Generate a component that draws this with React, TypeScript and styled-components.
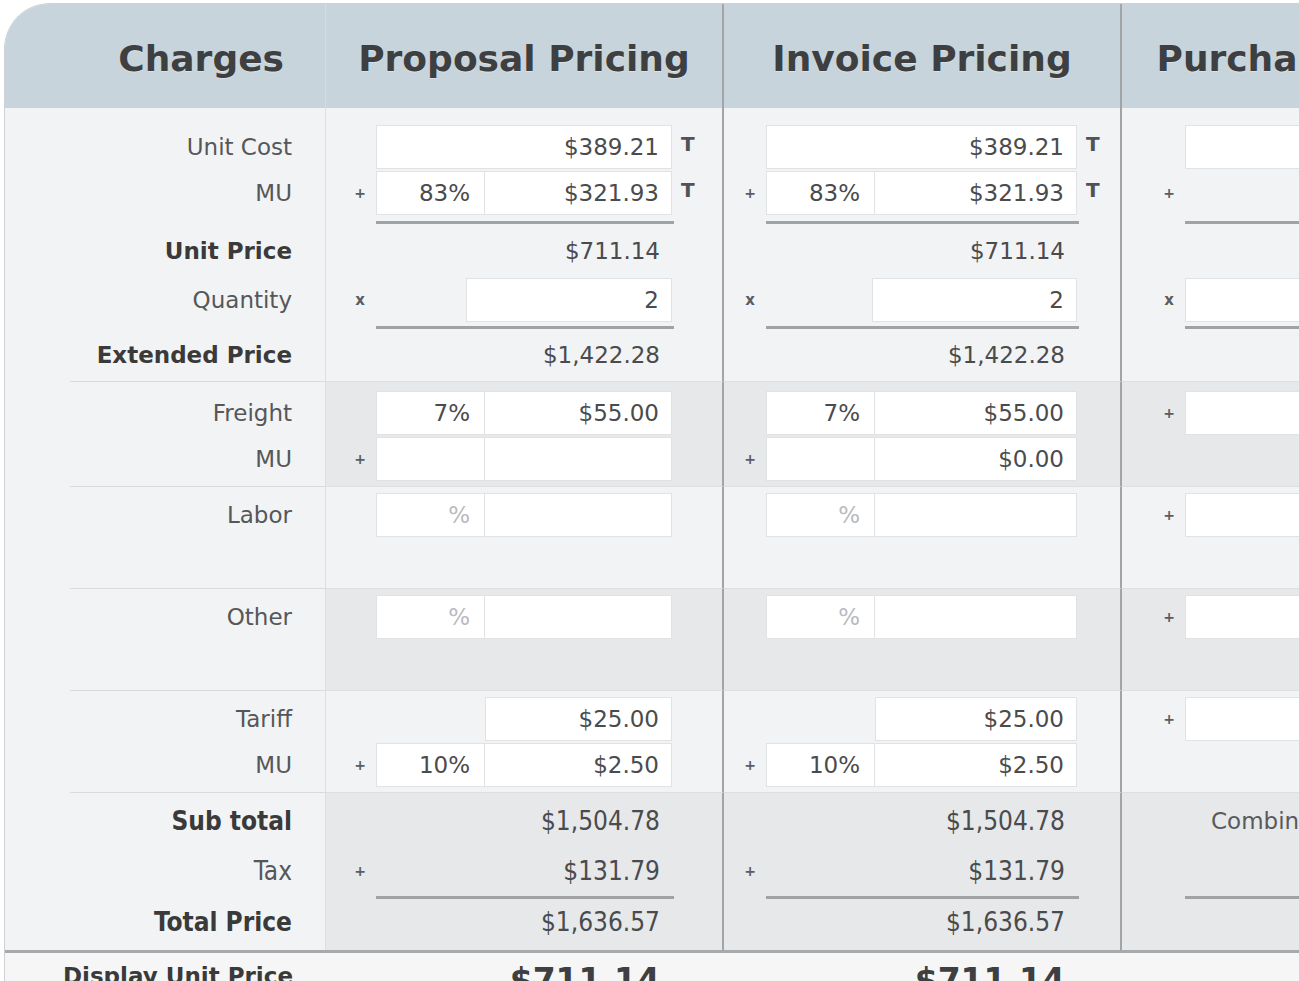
import React from 'react';
import styled, { createGlobalStyle } from 'styled-components';

const Global = createGlobalStyle`
  html, body { margin: 0; padding: 0; background: #ffffff; overflow: hidden; }
  body { font-family: "DejaVu Sans", Verdana, sans-serif; }
`;

const TEMPLATE = '321px 398px 398px 410px';

interface ColCfg { op: number; box: number; pct: number; qty: number; divider: boolean; }
const COLS: ColCfg[] = [
  { op: 50, box: 296, pct: 109, qty: 90, divider: true },
  { op: 42, box: 311, pct: 109, qty: 106, divider: true },
  { op: 63, box: 330, pct: 109, qty: 0, divider: false },
];

type Content =
  | { t: 'none' }
  | { t: 'op'; op: string }
  | { t: 'rule' }
  | { t: 'full'; op?: string; v: string; T?: boolean }
  | { t: 'pair'; op?: string; pct: string | null; ph?: boolean; money: string; T?: boolean }
  | { t: 'qty'; op?: string; v: string }
  | { t: 'text'; op?: string; v: string }
  | { t: 'note'; v: string };

interface LineDef { kind: 'row' | 'rule'; h: number; }
interface LabelDef { text: string; bold?: boolean; }
interface SectionDef {
  shaded: boolean;
  sep: boolean;
  padTop: number;
  padBottom: number;
  summary?: boolean;
  lines: LineDef[];
  labels: (LabelDef | null)[];
  cols: Content[][];
}

const row = (h: number): LineDef => ({ kind: 'row', h });
const rule = (h: number): LineDef => ({ kind: 'rule', h });
const L = (text: string): LabelDef => ({ text });
const B = (text: string): LabelDef => ({ text, bold: true });
const NONE: Content = { t: 'none' };
const RULE: Content = { t: 'rule' };

const SECTIONS: SectionDef[] = [
  {
    shaded: false, sep: false, padTop: 16, padBottom: 0,
    lines: [row(46), row(46), rule(8), row(53), row(46), rule(6), row(52)],
    labels: [L('Unit Cost'), L('MU'), null, B('Unit Price'), L('Quantity'), null, B('Extended Price')],
    cols: [
      [{ t: 'full', v: '$389.21', T: true }, { t: 'pair', op: '+', pct: '83%', money: '$321.93', T: true }, RULE, { t: 'text', v: '$711.14' }, { t: 'qty', op: 'x', v: '2' }, RULE, { t: 'text', v: '$1,422.28' }],
      [{ t: 'full', v: '$389.21', T: true }, { t: 'pair', op: '+', pct: '83%', money: '$321.93', T: true }, RULE, { t: 'text', v: '$711.14' }, { t: 'qty', op: 'x', v: '2' }, RULE, { t: 'text', v: '$1,422.28' }],
      [{ t: 'full', v: '' }, { t: 'op', op: '+' }, RULE, NONE, { t: 'qty', op: 'x', v: '' }, RULE, NONE],
    ],
  },
  {
    shaded: true, sep: true, padTop: 8, padBottom: 4,
    lines: [row(46), row(46)],
    labels: [L('Freight'), L('MU')],
    cols: [
      [{ t: 'pair', pct: '7%', money: '$55.00' }, { t: 'pair', op: '+', pct: '', money: '' }],
      [{ t: 'pair', pct: '7%', money: '$55.00' }, { t: 'pair', op: '+', pct: '', money: '$0.00' }],
      [{ t: 'full', op: '+', v: '' }, NONE],
    ],
  },
  {
    shaded: false, sep: true, padTop: 5, padBottom: 50,
    lines: [row(46)],
    labels: [L('Labor')],
    cols: [
      [{ t: 'pair', pct: '', ph: true, money: '' }],
      [{ t: 'pair', pct: '', ph: true, money: '' }],
      [{ t: 'full', op: '+', v: '' }],
    ],
  },
  {
    shaded: true, sep: true, padTop: 5, padBottom: 50,
    lines: [row(46)],
    labels: [L('Other')],
    cols: [
      [{ t: 'pair', pct: '', ph: true, money: '' }],
      [{ t: 'pair', pct: '', ph: true, money: '' }],
      [{ t: 'full', op: '+', v: '' }],
    ],
  },
  {
    shaded: false, sep: true, padTop: 5, padBottom: 4,
    lines: [row(46), row(46)],
    labels: [L('Tariff'), L('MU')],
    cols: [
      [{ t: 'pair', pct: null, money: '$25.00' }, { t: 'pair', op: '+', pct: '10%', money: '$2.50' }],
      [{ t: 'pair', pct: null, money: '$25.00' }, { t: 'pair', op: '+', pct: '10%', money: '$2.50' }],
      [{ t: 'full', op: '+', v: '' }, NONE],
    ],
  },
  {
    shaded: true, sep: true, padTop: 0, padBottom: 5, summary: true,
    lines: [row(55), row(46), rule(5), row(46)],
    labels: [B('Sub total'), L('Tax'), null, B('Total Price')],
    cols: [
      [{ t: 'text', v: '$1,504.78' }, { t: 'text', op: '+', v: '$131.79' }, RULE, { t: 'text', v: '$1,636.57' }],
      [{ t: 'text', v: '$1,504.78' }, { t: 'text', op: '+', v: '$131.79' }, RULE, { t: 'text', v: '$1,636.57' }],
      [{ t: 'note', v: 'Combined Tax' }, NONE, RULE, NONE],
    ],
  },
];

/* ---------- styled parts ---------- */

const Page = styled.div`
  width: 1299px;
  height: 981px;
  box-sizing: border-box;
  padding: 3px 0 0 4px;
  overflow: hidden;
`;

const Sheet = styled.div`
  width: 1528px;
  border-top: 1px solid #cdd2d6;
  border-left: 1px solid #cdd2d6;
  border-top-left-radius: 46px;
  overflow: hidden;
  background: #f2f3f5;
  color: #4a4a4a;
`;

const HeaderRow = styled.div`
  display: grid;
  grid-template-columns: ${TEMPLATE};
  height: 104px;
  background: #c8d4dc;
`;

const HeadCell = styled.div<{ $label?: boolean; $divider?: boolean }>`
  display: flex;
  align-items: center;
  justify-content: ${p => (p.$label ? 'flex-end' : 'center')};
  box-sizing: border-box;
  padding: 4px ${p => (p.$label ? '41px' : '0')} 0 0;
  font-size: 36px;
  font-weight: bold;
  color: #3d3f41;
  text-shadow: 0 1px 0 rgba(255, 255, 255, 0.35);
  white-space: nowrap;
  overflow: hidden;
  border-right: ${p => (p.$label ? '1px solid #d6dde2' : p.$divider ? '2px solid #a2a5a8' : 'none')};
`;

const SectionRow = styled.div`
  display: grid;
  grid-template-columns: ${TEMPLATE};
`;

const LabelCell = styled.div`
  box-sizing: border-box;
  padding-left: 65px;
  border-right: 1px solid #dcdee1;
`;

const LabelStack = styled.div<{ $sep: boolean; $pt: number; $pb: number }>`
  ${p => (p.$sep ? 'border-top: 1px solid #d9dadc;' : '')}
  padding: ${p => p.$pt}px 33px ${p => p.$pb}px 0;
`;

const LabelLine = styled.div<{ $h: number; $bold?: boolean; $summary?: boolean }>`
  height: ${p => p.$h}px;
  display: flex;
  align-items: center;
  justify-content: flex-end;
  white-space: nowrap;
  font-size: ${p => (p.$summary ? '26px' : '23px')};
  font-family: ${p => (p.$summary ? '"DejaVu Sans Condensed", "DejaVu Sans", sans-serif' : 'inherit')};
  font-stretch: ${p => (p.$summary ? 'condensed' : 'normal')};
  font-weight: ${p => (p.$bold ? 'bold' : 'normal')};
  color: ${p => (p.$bold ? '#3a3a3a' : '#555759')};
`;

const Gap = styled.div<{ $h: number }>`
  height: ${p => p.$h}px;
`;

const ValueCell = styled.div<{ $shaded: boolean; $divider: boolean; $sep: boolean; $pt: number; $pb: number }>`
  box-sizing: border-box;
  background: ${p => (p.$shaded ? '#e7e8ea' : '#f2f3f5')};
  border-right: ${p => (p.$divider ? '2px solid #a2a5a8' : 'none')};
  ${p => (p.$sep ? 'border-top: 1px solid #dedfe1;' : '')}
  padding: ${p => p.$pt}px 0 ${p => p.$pb}px 0;
  overflow: hidden;
`;

const Line = styled.div<{ $h: number; $summary?: boolean }>`
  height: ${p => p.$h}px;
  display: flex;
  align-items: center;
  font-size: ${p => (p.$summary ? '26px' : '23px')};
  font-family: ${p => (p.$summary ? '"DejaVu Sans Condensed", "DejaVu Sans", sans-serif' : 'inherit')};
  font-stretch: ${p => (p.$summary ? 'condensed' : 'normal')};
`;

const RuleLine = styled.div<{ $h: number }>`
  height: ${p => p.$h}px;
  display: flex;
  align-items: flex-end;
`;

const RuleBar = styled.div<{ $ml: number; $w: number }>`
  margin-left: ${p => p.$ml}px;
  flex: 0 0 ${p => p.$w}px;
  height: 3px;
  background: #a0a3a6;
`;

const OpSlot = styled.div<{ $w: number; $x?: boolean }>`
  flex: 0 0 ${p => p.$w}px;
  box-sizing: border-box;
  padding-right: ${p => (p.$x ? '11px' : '10px')};
  text-align: right;
  font-family: "DejaVu Sans", sans-serif;
  font-stretch: normal;
  font-size: ${p => (p.$x ? '15px' : '14px')};
  font-weight: bold;
  color: #5b5d60;
`;

const BoxArea = styled.div<{ $w: number }>`
  flex: 0 0 ${p => p.$w}px;
  width: ${p => p.$w}px;
  display: flex;
  height: 44px;
`;

const Field = styled.input<{ $w?: number; $ml?: number; $joined?: boolean; $pr?: number }>`
  box-sizing: border-box;
  height: 44px;
  flex: ${p => (p.$w ? `0 0 ${p.$w}px` : '1 1 0%')};
  width: ${p => (p.$w ? `${p.$w}px` : '0')};
  min-width: 0;
  margin: 0 0 0 ${p => p.$ml ?? 0}px;
  border: 1px solid #e1e2e4;
  ${p => (p.$joined ? 'border-left: none;' : '')}
  border-radius: 0;
  background: #ffffff;
  padding: 0 ${p => p.$pr ?? 12}px 0 0;
  text-align: right;
  font-family: "DejaVu Sans", sans-serif;
  font-size: 23px;
  color: #4a4b4d;
  outline: none;
  &::placeholder { color: #b7bbc0; }
`;

const Spacer = styled.div<{ $w: number }>`
  flex: 0 0 ${p => p.$w}px;
`;

const TMark = styled.div`
  align-self: flex-start;
  margin: 8px 0 0 9px;
  font-size: 20px;
  font-weight: bold;
  color: #505255;
`;

const ValueText = styled.div<{ $w: number }>`
  flex: 0 0 ${p => p.$w}px;
  box-sizing: border-box;
  padding-right: 12px;
  text-align: right;
  white-space: nowrap;
  color: #4a4b4d;
`;

const Note = styled.div`
  padding-left: 26px;
  white-space: nowrap;
  font-family: "DejaVu Sans", sans-serif;
  font-stretch: normal;
  font-size: 23px;
  color: #585a5d;
`;

const FooterRow = styled.div`
  display: grid;
  grid-template-columns: ${TEMPLATE};
  border-top: 3px solid #a7aaad;
  background: #f6f6f7;
  height: 80px;
`;

const FooterLabel = styled.div`
  box-sizing: border-box;
  padding: 10px 33px 0 0;
  text-align: right;
  font-size: 23px;
  font-weight: bold;
  color: #3a3a3a;
  white-space: nowrap;
`;

const FooterValueCell = styled.div`
  display: flex;
  padding-top: 8px;
`;

const FooterValue = styled.div<{ $w: number }>`
  flex: 0 0 ${p => p.$w}px;
  box-sizing: border-box;
  padding-right: 12px;
  text-align: right;
  font-size: 33px;
  font-weight: bold;
  color: #3d3f41;
  white-space: nowrap;
`;

/* ---------- components ---------- */

function ValueLine({ line, c, cfg, summary }: { line: LineDef; c: Content; cfg: ColCfg; summary?: boolean }) {
  if (line.kind === 'rule') {
    return (
      <RuleLine $h={line.h}>
        {c.t === 'rule' && <RuleBar $ml={cfg.op} $w={cfg.box + 2} />}
      </RuleLine>
    );
  }
  const op = 'op' in c ? c.op : undefined;
  const opSlot = <OpSlot $w={cfg.op} $x={op === 'x'}>{op ?? ''}</OpSlot>;
  switch (c.t) {
    case 'none':
      return <Line $h={line.h} />;
    case 'op':
      return <Line $h={line.h}>{opSlot}</Line>;
    case 'full':
      return (
        <Line $h={line.h}>
          {opSlot}
          <BoxArea $w={cfg.box}>
            <Field readOnly value={c.v} />
          </BoxArea>
          {c.T && <TMark>T</TMark>}
        </Line>
      );
    case 'pair':
      return (
        <Line $h={line.h}>
          {opSlot}
          <BoxArea $w={cfg.box}>
            {c.pct === null ? (
              <Spacer $w={cfg.pct} />
            ) : (
              <Field readOnly $w={cfg.pct} $pr={14} value={c.pct} placeholder={c.ph ? '%' : undefined} />
            )}
            <Field readOnly $joined={c.pct !== null} value={c.money} />
          </BoxArea>
          {c.T && <TMark>T</TMark>}
        </Line>
      );
    case 'qty':
      return (
        <Line $h={line.h}>
          {opSlot}
          <BoxArea $w={cfg.box}>
            <Field readOnly $ml={cfg.qty} value={c.v} />
          </BoxArea>
        </Line>
      );
    case 'text':
      return (
        <Line $h={line.h} $summary={summary}>
          {opSlot}
          <ValueText $w={cfg.box}>{c.v}</ValueText>
        </Line>
      );
    case 'note':
      return (
        <Line $h={line.h}>
          <Spacer $w={cfg.op} />
          <Note>{c.v}</Note>
        </Line>
      );
    default:
      return <Line $h={line.h} />;
  }
}

function Section({ def }: { def: SectionDef }) {
  return (
    <SectionRow>
      <LabelCell>
        <LabelStack $sep={def.sep} $pt={def.padTop} $pb={def.padBottom}>
          {def.lines.map((ln, i) => {
            const lab = def.labels[i];
            if (ln.kind === 'rule' || !lab) return <Gap key={i} $h={ln.h} />;
            return (
              <LabelLine key={i} $h={ln.h} $bold={lab.bold} $summary={def.summary}>
                {lab.text}
              </LabelLine>
            );
          })}
        </LabelStack>
      </LabelCell>
      {COLS.map((cfg, ci) => (
        <ValueCell key={ci} $shaded={def.shaded} $divider={cfg.divider} $sep={def.sep} $pt={def.padTop} $pb={def.padBottom}>
          {def.lines.map((ln, i) => (
            <ValueLine key={i} line={ln} c={def.cols[ci][i]} cfg={cfg} summary={def.summary} />
          ))}
        </ValueCell>
      ))}
    </SectionRow>
  );
}

export default function App() {
  return (
    <>
      <Global />
      <Page>
        <Sheet>
          <HeaderRow>
            <HeadCell $label>Charges</HeadCell>
            <HeadCell $divider>Proposal Pricing</HeadCell>
            <HeadCell $divider>Invoice Pricing</HeadCell>
            <HeadCell>Purchase Pricing</HeadCell>
          </HeaderRow>
          {SECTIONS.map((s, i) => (
            <Section key={i} def={s} />
          ))}
          <FooterRow>
            <FooterLabel>Display Unit Price</FooterLabel>
            <FooterValueCell>
              <Spacer $w={COLS[0].op} />
              <FooterValue $w={COLS[0].box}>$711.14</FooterValue>
            </FooterValueCell>
            <FooterValueCell>
              <Spacer $w={COLS[1].op} />
              <FooterValue $w={COLS[1].box}>$711.14</FooterValue>
            </FooterValueCell>
            <FooterValueCell />
          </FooterRow>
        </Sheet>
      </Page>
    </>
  );
}
